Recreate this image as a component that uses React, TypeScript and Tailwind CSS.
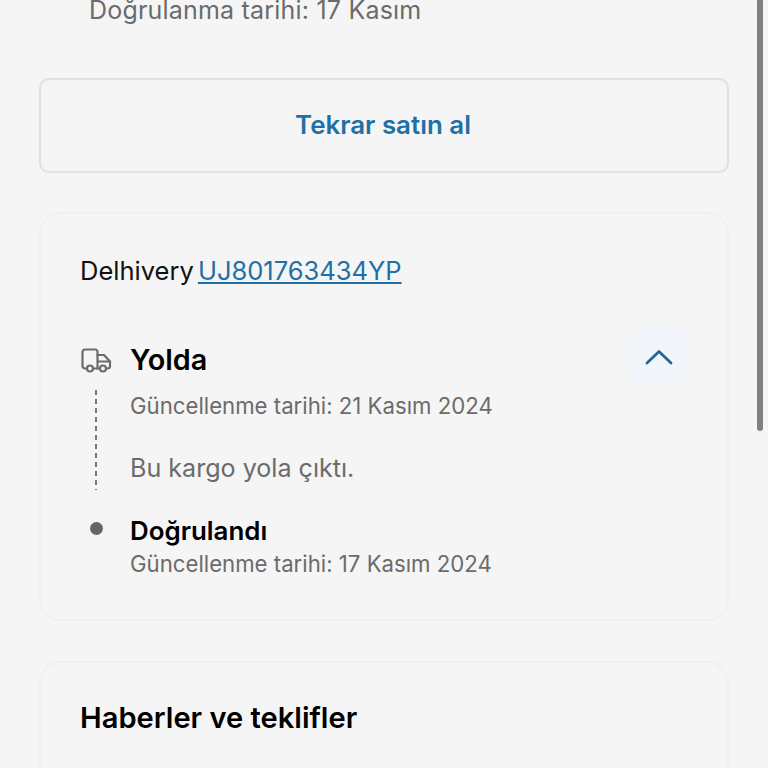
import React from "react";

export default function App() {
  return (
    <div className="relative h-[768px] w-[768px] overflow-hidden bg-[#f5f5f5] font-['Inter',sans-serif]">
      <div className="absolute right-[5px] top-0 h-[431px] w-[6px] rounded-b-full bg-[#808080]" />
      <div className="flex flex-col px-[39px]">
        <div className="mt-[-6px] h-[32px] pl-[50px] text-[25px] leading-[32px] tracking-[0.2px] text-[#6b6b6b]">Doğrulanma tarihi: 17 Kasım</div>
        <div className="mt-[52px] flex h-[95px] w-[690px] items-center justify-center rounded-[10px] border-2 border-[#e0e0e0] pr-[2px] text-[25.9px] font-semibold text-[#1f70a6]">
          Tekrar satın al
        </div>
        <div className="mt-[39px] flex h-[409px] w-[690px] flex-col rounded-[22px] border-2 border-[#f0f0f0] pl-[39px] pr-[39px]">
          <div className="mt-[41px] h-[32px] text-[25.5px] leading-[32px] text-[#111]">
            Delhivery <span className="ml-[-3px] text-[#1f70a6] underline underline-offset-2">UJ801763434YP</span>
          </div>
          <div className="mt-[40px] flex h-[60px] items-center">
            <div className="flex w-[50px] items-center pl-[1px] pt-[6px]">
              <svg width="31" height="25" viewBox="0 0 31 25" fill="none" stroke="#6b6b6b" strokeWidth="2.2" strokeLinecap="round" strokeLinejoin="round">
                <path d="M6 20.5H4a2.5 2.5 0 0 1-2.5-2.5V4A2.5 2.5 0 0 1 4 1.5h10A2.5 2.5 0 0 1 16.500 4v16.500H12" />
                <path d="M16.500 7H23l6 6.500V18a2.500 2.500 0 0 1-2.500 2.500H25M19 20.500h-2.500" />
                <path d="M17 13.500h12" />
                <circle cx="9" cy="20.500" r="3" />
                <circle cx="22" cy="20.500" r="3" />
              </svg>
            </div>
            <div className="flex-1 pt-[5px] text-[28.8px] font-semibold text-black">Yolda</div>
            <div className="flex h-[60px] w-[60px] items-center justify-center rounded-[12px] bg-[#f2f6fb] pl-[1px]">
              <svg width="28" height="16" viewBox="0 0 28 16" fill="none" stroke="#1f6a9a" strokeWidth="2.800" strokeLinecap="round" strokeLinejoin="round">
                <path d="M2 14 14 2.500 26 14" />
              </svg>
            </div>
          </div>
          <div className="flex">
            <div className="flex w-[50px] pl-[15px]">
              <div className="mt-[3px] h-[100px] w-[2px] bg-[repeating-linear-gradient(to_bottom,#777_0,#777_5px,transparent_5px,transparent_9px)]" />
            </div>
            <div className="flex flex-col">
              <div className="mt-[4px] text-[22.2px] leading-[30px] text-[#6b6b6b]">Güncellenme tarihi: 21 Kasım 2024</div>
              <div className="mt-[31px] text-[25.1px] leading-[32px] text-[#6b6b6b]">Bu kargo yola çıktı.</div>
            </div>
          </div>
          <div className="mt-[25px] flex">
            <div className="w-[50px] pl-[10px] pt-[7px]">
              <div className="h-[13px] w-[13px] rounded-full bg-[#666]" />
            </div>
            <div className="flex flex-col">
              <div className="text-[25.9px] font-semibold leading-[32px] text-black">Doğrulandı</div>
              <div className="mt-[1px] text-[22.2px] leading-[32px] text-[#6b6b6b]">Güncellenme tarihi: 17 Kasım 2024</div>
            </div>
          </div>
        </div>
        <div className="mt-[40px] h-[200px] w-[690px] rounded-[22px] border-2 border-[#f0f0f0] pl-[39px] pt-[37px]">
          <div className="text-[29.1px] font-semibold leading-[36px] text-black">Haberler ve teklifler</div>
        </div>
      </div>
    </div>
  );
}
